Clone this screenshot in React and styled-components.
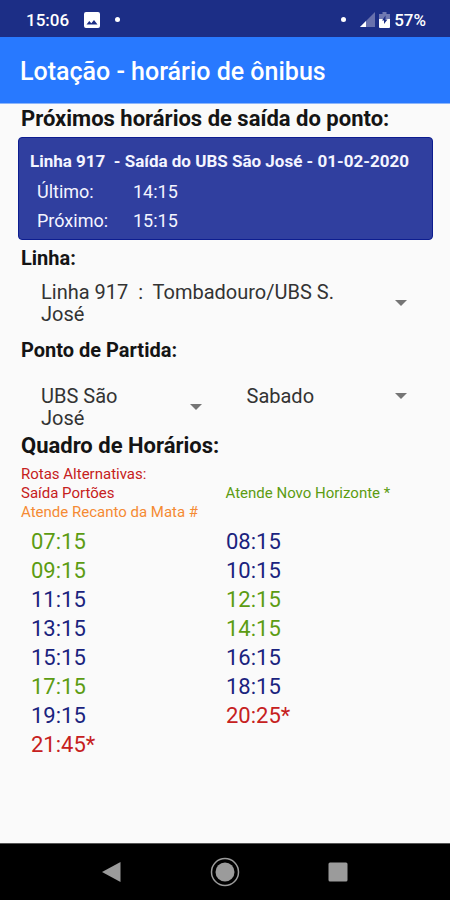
import React, { useState } from "react";
import styled, { createGlobalStyle } from "styled-components";

const GlobalStyle = createGlobalStyle`
  * { box-sizing: border-box; }
  body {
    margin: 0;
    background: #fafafa;
    color: #141414;
    font-family: Roboto, "Liberation Sans", sans-serif;
  }
  h1, h2, h3, p, dl, dd, ul { margin: 0; padding: 0; }
`;

const Screen = styled.div`
  min-height: 100vh;
  display: flex;
  flex-direction: column;
`;

const StatusBar = styled.div`
  height: 37px;
  padding: 2px 24px 0 26px;
  display: flex;
  align-items: center;
  justify-content: space-between;
  background: #1c2e86;
  color: #fff;
  font-size: 17px;
  font-weight: 500;
`;

const StatusGroup = styled.div`
  display: flex;
  align-items: center;
  gap: ${(p) => p.$gap}px;
`;

const Dot = styled.span`
  width: 5px;
  height: 5px;
  margin-right: ${(p) => p.$after || 0}px;
  border-radius: 50%;
  background: #fff;
`;

const AppBar = styled.header`
  height: 67px;
  padding: 3px 20px 0;
  display: flex;
  align-items: center;
  background: #2879ff;
  border-bottom: 1px solid #8db6fa;
  color: #fff;
`;

const AppTitle = styled.h1`
  font-size: 25px;
  line-height: 28px;
  font-weight: 500;
`;

const Content = styled.main`
  flex: 1;
  padding: 2px 17px 0 18px;
`;

const Heading = styled.h2`
  padding-left: 3px;
  font-size: 22px;
  line-height: 26px;
  font-weight: 700;
`;

const FieldLabel = styled.label`
  display: block;
  padding-left: 3px;
  font-size: 20px;
  line-height: 24px;
  font-weight: 700;
`;

const Card = styled.section`
  margin: 5px 0 6px;
  padding: 12px 11px 4px;
  border: 1px solid #0d1d90;
  border-radius: 4px;
  background: #303f9f;
  color: #f4f5ff;
`;

const CardTitle = styled.h3`
  font-size: 17px;
  line-height: 22px;
  font-weight: 700;
  white-space: pre-wrap;
`;

const Departures = styled.dl`
  display: grid;
  grid-template-columns: 96px 1fr;
  padding: 5px 0 0 7px;
  font-size: 18px;
  line-height: 29px;
`;

const SpinnerBox = styled.div`
  position: relative;
  display: grid;
  grid-template-columns: 1fr 12px;
  align-items: center;
  padding: 0 8px 0 3px;
  color: #333;
  font-size: 20px;
  line-height: 22px;
`;

const SpinnerText = styled.span`
  padding-right: 40px;
  white-space: pre-wrap;
`;

const SpinnerArrow = styled.svg`
  width: 12px;
  height: 6px;
  fill: #757575;
`;

const SpinnerSelect = styled.select`
  position: absolute;
  inset: 0;
  width: 100%;
  height: 100%;
  border: 0;
  font: inherit;
  opacity: 0;
  cursor: pointer;
`;

const LineField = styled.div`
  padding: 11px 18px 13px 20px;
`;

const PairFields = styled.div`
  display: grid;
  grid-template-columns: 1fr 1fr;
  gap: 34px;
  align-items: start;
  padding: 23px 18px 4px 20px;
`;

const Legend = styled.ul`
  display: grid;
  grid-template-columns: 1fr 1fr;
  padding: 6px 3px 0;
  list-style: none;
  font-size: 15px;
  line-height: 19px;
`;

const LegendItem = styled.li`
  grid-column: ${(p) => p.$column || "auto"};
  color: ${(p) => p.$color};
  white-space: nowrap;
`;

const Times = styled.table`
  width: 100%;
  margin-top: 5px;
  table-layout: fixed;
  border-collapse: collapse;
`;

const TimeCell = styled.td`
  width: 195px;
  padding: 0 0 0 13px;
  color: ${(p) => p.$color};
  font-size: 22px;
  line-height: 29px;

  &:last-child { width: auto; }
`;

const NavBar = styled.nav`
  height: 57px;
  display: flex;
  align-items: center;
  justify-content: center;
  gap: 73px;
  background: #000;
  border-top: 1px solid #555;
`;

const NavButton = styled.button`
  width: 40px;
  height: 40px;
  padding: 0;
  display: grid;
  place-items: center;
  border: 0;
  background: none;
  color: #9b9b9b;
  cursor: pointer;
`;

const COLORS = { g: "#5c9c12", b: "#1a237e", r: "#c62020", o: "#f58a33" };

const ROWS = [
  [["07:15", "g"], ["08:15", "b"]],
  [["09:15", "g"], ["10:15", "b"]],
  [["11:15", "b"], ["12:15", "g"]],
  [["13:15", "b"], ["14:15", "g"]],
  [["15:15", "b"], ["16:15", "b"]],
  [["17:15", "g"], ["18:15", "b"]],
  [["19:15", "b"], ["20:25*", "r"]],
  [["21:45*", "r"], ["", "b"]],
];

function Spinner({ id, label, options }) {
  const [value, setValue] = useState(options[0]);
  return (
    <SpinnerBox>
      <SpinnerText aria-hidden="true">{value}</SpinnerText>
      <SpinnerArrow viewBox="0 0 12 6" aria-hidden="true">
        <path d="M0 0h12L6 6z" />
      </SpinnerArrow>
      <SpinnerSelect
        id={id}
        aria-label={label}
        value={value}
        onChange={(e) => setValue(e.target.value)}
      >
        {options.map((o) => (
          <option key={o} value={o}>{o}</option>
        ))}
      </SpinnerSelect>
    </SpinnerBox>
  );
}

export default function App() {
  return (
    <>
      <GlobalStyle />
      <Screen>
        <StatusBar>
          <StatusGroup $gap={15}>
            <span>15:06</span>
            <svg width="16" height="16" viewBox="0 0 16 16" aria-hidden="true">
              <path
                fill="#fff"
                fillRule="evenodd"
                d="M2 0h12a2 2 0 0 1 2 2v12a2 2 0 0 1-2 2H2a2 2 0 0 1-2-2V2a2 2 0 0 1 2-2zM2.500 12.500h11L10 8l-2.700 3.300L5.300 9z"
              />
            </svg>
            <Dot />
          </StatusGroup>
          <StatusGroup $gap={4}>
            <Dot $after={10} />
            <svg width="15" height="15" viewBox="0 0 15 15" aria-hidden="true">
              <path fill="#6871ad" d="M15 0v15H0z" />
              <path fill="#fff" d="M6 9v6H0z" />
            </svg>
            <svg width="11" height="16" viewBox="0 0 11 16" aria-hidden="true">
              <path fill="#7079b2" d="M3.500 0h4v2H11v6H0V2h3.500z" />
              <path fill="#fff" d="M0 7h11v8a1 1 0 0 1-1 1H1a1 1 0 0 1-1-1z" />
              <path fill="#1c2e86" d="M6.500 3.500v4H8.500L5 12V8.500H3z" />
            </svg>
            <span>57%</span>
          </StatusGroup>
        </StatusBar>

        <AppBar>
          <AppTitle>Lotação - horário de ônibus</AppTitle>
        </AppBar>

        <Content>
          <Heading>Próximos horários de saída do ponto:</Heading>
          <Card>
            <CardTitle>{"Linha 917  - Saída do UBS São José - 01-02-2020"}</CardTitle>
            <Departures>
              <dt>Último:</dt>
              <dd>14:15</dd>
              <dt>Próximo:</dt>
              <dd>15:15</dd>
            </Departures>
          </Card>

          <FieldLabel htmlFor="linha">Linha:</FieldLabel>
          <LineField>
            <Spinner id="linha" options={["Linha 917  :  Tombadouro/UBS S. José"]} />
          </LineField>

          <FieldLabel htmlFor="ponto">Ponto de Partida:</FieldLabel>
          <PairFields>
            <Spinner id="ponto" options={["UBS São José"]} />
            <Spinner id="dia" label="Dia" options={["Sabado"]} />
          </PairFields>

          <Heading>Quadro de Horários:</Heading>
          <Legend>
            <LegendItem $color={COLORS.r} $column="1 / -1">Rotas Alternativas:</LegendItem>
            <LegendItem $color={COLORS.r}>Saída Portões</LegendItem>
            <LegendItem $color={COLORS.g}>Atende Novo Horizonte *</LegendItem>
            <LegendItem $color={COLORS.o}>Atende Recanto da Mata #</LegendItem>
          </Legend>
          <Times>
            <tbody>
              {ROWS.map((row) => (
                <tr key={row[0][0]}>
                  {row.map(([time, color], i) => (
                    <TimeCell key={i} $color={COLORS[color]}>{time}</TimeCell>
                  ))}
                </tr>
              ))}
            </tbody>
          </Times>
        </Content>

        <NavBar aria-label="Sistema">
          <NavButton type="button" aria-label="Voltar">
            <svg width="20" height="20" viewBox="0 0 20 20">
              <path fill="currentColor" d="M18.500 0v20L0 10z" />
            </svg>
          </NavButton>
          <NavButton type="button" aria-label="Início">
            <svg width="30" height="30" viewBox="0 0 30 30">
              <circle cx="15" cy="15" r="13.500" fill="none" stroke="currentColor" strokeWidth="1.500" />
              <circle cx="15" cy="15" r="9.500" fill="currentColor" />
            </svg>
          </NavButton>
          <NavButton type="button" aria-label="Recentes">
            <svg width="20" height="20" viewBox="0 0 20 20">
              <rect x="0.500" y="0.500" width="19" height="19" rx="1.500" fill="currentColor" />
            </svg>
          </NavButton>
        </NavBar>
      </Screen>
    </>
  );
}
